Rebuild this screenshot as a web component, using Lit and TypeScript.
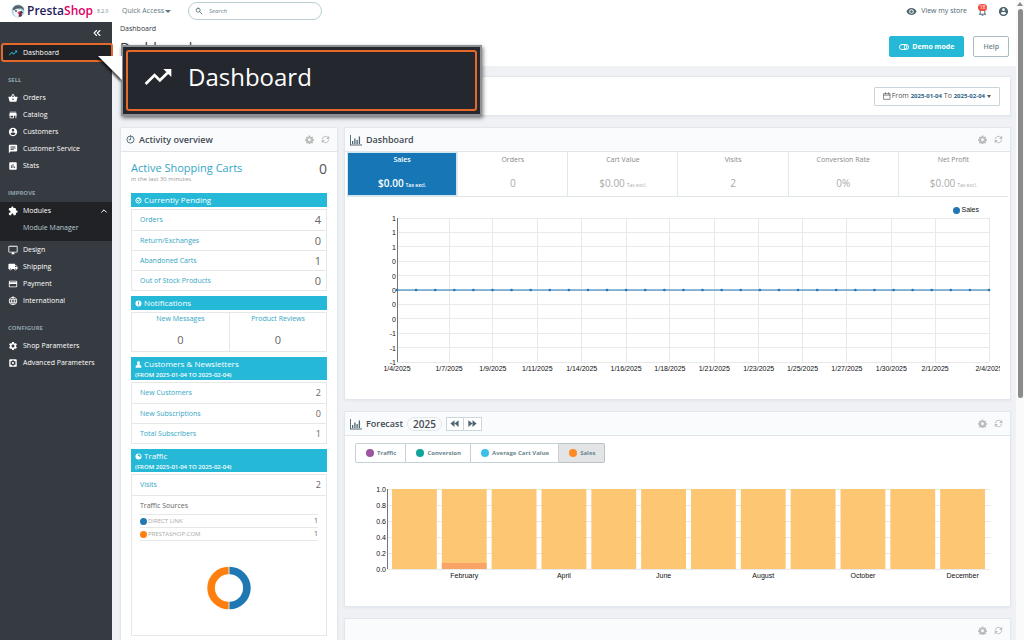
import { LitElement, html, svg, css, nothing, TemplateResult, SVGTemplateResult } from "lit";
import { customElement, state } from "lit/decorators.js";
import { classMap } from "lit/directives/class-map.js";
import { styleMap } from "lit/directives/style-map.js";

const GEAR =
  "M19.14 12.94c.04-.3.06-.61.06-.94 0-.32-.02-.64-.07-.94l2.03-1.58c.18-.14.23-.41.12-.61l-1.92-3.32c-.12-.22-.37-.29-.59-.22l-2.39.96c-.5-.38-1.03-.7-1.62-.94l-.36-2.54c-.04-.24-.24-.41-.48-.41h-3.84c-.24 0-.43.17-.47.41l-.36 2.54c-.59.24-1.13.57-1.62.94l-2.39-.96c-.22-.08-.47 0-.59.22L2.74 8.87c-.12.21-.08.47.12.61l2.03 1.58c-.05.3-.09.63-.09.94s.02.64.07.94l-2.03 1.58c-.18.14-.23.41-.12.61l1.92 3.32c.12.22.37.29.59.22l2.39-.96c.5.38 1.03.7 1.62.94l.36 2.54c.05.24.24.41.48.41h3.84c.24 0 .44-.17.47-.41l.36-2.54c.59-.24 1.13-.56 1.62-.94l2.39.96c.22.08.47 0 .59-.22l1.92-3.32c.12-.22.07-.47-.12-.61l-2.01-1.58zM12 15.6c-1.98 0-3.6-1.62-3.6-3.6s1.62-3.6 3.6-3.6 3.6 1.62 3.6 3.6-1.62 3.6-3.6 3.6z";

const stroke = (d: string, w = 2) =>
  svg`<path d=${d} fill="none" stroke="currentColor" stroke-width=${w} stroke-linecap="round" stroke-linejoin="round"/>`;

const ICONS: Record<string, SVGTemplateResult> = {
  trend: svg`<path d="M16 6l2.29 2.29-4.88 4.88-4-4L2 16.59 3.41 18l6-6 4 4 6.3-6.29L22 12V6z"/>`,
  basket: svg`<path d="M17.21 9l-4.38-6.56c-.19-.28-.51-.42-.83-.42-.32 0-.64.14-.83.43L6.79 9H2c-.55 0-1 .45-1 1 0 .09.01.18.04.27l2.54 9.27c.23.84 1 1.46 1.92 1.46h13c.92 0 1.69-.62 1.93-1.46l2.54-9.27L23 10c0-.55-.45-1-1-1h-4.79zM9 9l3-4.4L15 9H9zm3 8c-1.1 0-2-.9-2-2s.9-2 2-2 2 .9 2 2-.9 2-2 2z"/>`,
  store: svg`<path d="M20 4H4v2h16V4zm1 10v-2l-1-5H4l-1 5v2h1v6h10v-6h4v6h2v-6h1zm-9 4H6v-4h6v4z"/>`,
  account: svg`<path d="M12 2C6.48 2 2 6.48 2 12s4.48 10 10 10 10-4.48 10-10S17.52 2 12 2zm0 3c1.66 0 3 1.34 3 3s-1.34 3-3 3-3-1.34-3-3 1.34-3 3-3zm0 14.2c-2.5 0-4.71-1.28-6-3.22.03-1.99 4-3.08 6-3.08 1.99 0 5.97 1.09 6 3.08-1.29 1.94-3.5 3.22-6 3.22z"/>`,
  chat: svg`<path d="M20 2H4c-1.1 0-1.99.9-1.99 2L2 22l4-4h14c1.1 0 2-.9 2-2V4c0-1.1-.9-2-2-2zM6 9h12v2H6V9zm8 5H6v-2h8v2zm4-6H6V6h12v2z"/>`,
  stats: svg`<path d="M19 3H5c-1.1 0-2 .9-2 2v14c0 1.1.9 2 2 2h14c1.1 0 2-.9 2-2V5c0-1.1-.9-2-2-2zM9 17H7v-7h2v7zm4 0h-2V7h2v10zm4 0h-2v-4h2v4z"/>`,
  puzzle: svg`<path d="M20.5 11H19V7c0-1.1-.9-2-2-2h-4V3.5C13 2.12 11.88 1 10.5 1S8 2.12 8 3.5V5H4c-1.1 0-1.99.9-1.99 2v3.8H3.5c1.49 0 2.7 1.21 2.7 2.7s-1.21 2.7-2.7 2.7H2V20c0 1.1.9 2 2 2h3.8v-1.5c0-1.49 1.21-2.7 2.7-2.7 1.49 0 2.7 1.21 2.7 2.7V22H17c1.1 0 2-.9 2-2v-4h1.5c1.38 0 2.5-1.12 2.5-2.5S21.88 11 20.5 11z"/>`,
  desktop: svg`<path d="M21 2H3c-1.1 0-2 .9-2 2v12c0 1.1.9 2 2 2h7v2H8v2h8v-2h-2v-2h7c1.1 0 2-.9 2-2V4c0-1.1-.9-2-2-2zm0 14H3V4h18v12z"/>`,
  truck: svg`<path d="M20 8h-3V4H3c-1.1 0-2 .9-2 2v11h2c0 1.66 1.34 3 3 3s3-1.34 3-3h6c0 1.66 1.34 3 3 3s3-1.34 3-3h2v-5l-3-4zM6 18.5c-.83 0-1.5-.67-1.5-1.5s.67-1.5 1.5-1.5 1.5.67 1.5 1.5-.67 1.5-1.5 1.5zm13.5-9l1.96 2.5H17V9.5h2.5zm-1.5 9c-.83 0-1.5-.67-1.5-1.5s.67-1.5 1.5-1.5 1.5.67 1.5 1.5-.67 1.5-1.5 1.5z"/>`,
  card: svg`<path d="M20 4H4c-1.11 0-1.99.89-1.99 2L2 18c0 1.11.89 2 2 2h16c1.11 0 2-.89 2-2V6c0-1.11-.89-2-2-2zm0 14H4v-6h16v6zm0-10H4V6h16v2z"/>`,
  globe: stroke("M12 3a9 9 0 1 0 0 18a9 9 0 1 0 0-18zM3.6 9h16.8M3.6 15h16.8M12 3c-4.6 5-4.6 13 0 18c4.6-5 4.6-13 0-18z"),
  gear: svg`<path d=${GEAR}/>`,
  gearbox: svg`<path fill-rule="evenodd" d="M5 3h14a2 2 0 0 1 2 2v14a2 2 0 0 1-2 2H5a2 2 0 0 1-2-2V5a2 2 0 0 1 2-2zM10.500 5.500l-.4 1.700-1.400.8-1.700-.6-1.500 2.600 1.300 1.200v1.600l-1.300 1.200 1.500 2.600 1.700-.6 1.400.8.4 1.700h3l.4-1.700 1.400-.8 1.700.6 1.500-2.600-1.300-1.200v-1.600l1.300-1.200-1.500-2.600-1.700.6-1.400-.8-.4-1.700zM12 9.400a2.600 2.600 0 1 1 0 5.200a2.600 2.600 0 1 1 0-5.200z"/>`,
  eye: svg`<path d="M12 4.500C7 4.500 2.730 7.610 1 12c1.730 4.390 6 7.500 11 7.500s9.270-3.110 11-7.500c-1.730-4.390-6-7.500-11-7.500zM12 17c-2.760 0-5-2.240-5-5s2.240-5 5-5 5 2.240 5 5-2.240 5-5 5zm0-8c-1.660 0-3 1.340-3 3s1.340 3 3 3 3-1.340 3-3-1.340-3-3-3z"/>`,
  bell: svg`<path d="M12 22c1.100 0 2-.9 2-2h-4c0 1.100.9 2 2 2zm6-6v-5c0-3.070-1.630-5.640-4.500-6.320V4c0-.83-.67-1.500-1.500-1.500s-1.500.67-1.500 1.500v.68C7.640 5.360 6 7.920 6 11v5l-2 2v1h16v-1l-2-2zm-2 1H8v-6c0-2.480 1.510-4.500 4-4.500s4 2.020 4 4.500v6z"/>`,
  cog: svg`<path fill-rule="evenodd" d="M10 1.500h4l.6 3 2 .9 2.600-1.700 2.600 2.700-1.600 2.500.8 2 3 .6v3.800l-3 .5-.8 2 1.600 2.500-2.700 2.700-2.500-1.700-2 .8-.6 3h-4l-.6-3-2-.8-2.500 1.700-2.700-2.700 1.700-2.500-.9-2-3-.5v-3.800l3-.6.9-2-1.700-2.500 2.700-2.700 2.500 1.700 2-.9zM12 8.800a3.800 3.800 0 1 0 0 7.600a3.800 3.800 0 1 0 0-7.600z"/>`,
  refresh: svg`${stroke("M3.500 10.500A8.800 8.800 0 0 1 18.500 6M20.500 13.500A8.800 8.800 0 0 1 5.500 18", 2.6)}<path d="M22 2v8.500h-8.500zM2 22v-8.500h8.500z"/>`,
  clock: stroke("M12 2.500a9.500 9.500 0 1 0 0 19a9.500 9.500 0 1 0 0-19zM12.500 7v5.500H8.500", 2.5),
  check: stroke("M12 3a9 9 0 1 0 0 18a9 9 0 1 0 0-18zM8 11.500l3.500 3.500L18 7", 3.4),
  alert: svg`<path fill-rule="evenodd" d="M12 1.500a10.500 10.500 0 1 0 0 21a10.500 10.500 0 1 0 0-21zM10.300 5h3.400l-.4 8.500h-2.600zM10.500 15.500h3v3h-3z"/>`,
  user: svg`<path d="M12 1c3.200 0 5 2.300 5 5.800 0 2.700-1 4.800-2.400 6 4.400.8 7.400 2.600 7.400 8.200 0 1.400-1 2-2 2H4c-1 0-2-.6-2-2 0-5.600 3-7.400 7.400-8.200C8 11.600 7 9.500 7 6.800 7 3.300 8.800 1 12 1z"/>`,
  world: svg`<path fill-rule="evenodd" d="M12 1.500a10.500 10.500 0 1 0 0 21a10.500 10.500 0 1 0 0-21zM12 4.500l4 1 3.500 3.500-1 4-4-.5-1-2.500-3.500.5-.5-3z"/>`,
  chart: svg`<path d="M0 2h1.800v19H24v1.800H0zM4 14h2.600v6H4zM8.500 9h2.600v11H8.500zM13 12h2.600v8H13zM17.500 5h2.600v15h-2.600z"/>`,
  search: stroke("M9.500 3.500a6 6 0 1 0 0 12a6 6 0 1 0 0-12zM14 14l7 7", 2.4),
  calendar: stroke("M3 5h18v17H3zM3 9.500h18M7.500 2v4M16.500 2v4", 2),
  toggle: stroke("M7 6h10a6 6 0 0 1 0 12H7a6 6 0 0 1 0-12zM13 6v12M13 6a6 6 0 0 1 0 12", 2.2),
  collapse: stroke("M11 6l-6 6 6 6M19 6l-6 6 6 6", 2.6),
  up: stroke("M5 15.500l7-7 7 7", 3),
  prev: svg`<path d="M12 3v18L1 12zM23 3v18L12 12z"/>`,
  next: svg`<path d="M1 3v18l11-9zM12 3v18l11-9z"/>`,
};

const icon = (name: string, cls = "") =>
  html`<svg class="ico ${cls}" viewBox="0 0 24 24" fill="currentColor" aria-hidden="true">${ICONS[name]}</svg>`;

interface NavItem { label: string; icon: string; sub?: string }
const NAV: { title: string; items: NavItem[] }[] = [
  {
    title: "SELL",
    items: [
      { label: "Orders", icon: "basket" },
      { label: "Catalog", icon: "store" },
      { label: "Customers", icon: "account" },
      { label: "Customer Service", icon: "chat" },
      { label: "Stats", icon: "stats" },
    ],
  },
  {
    title: "IMPROVE",
    items: [
      { label: "Modules", icon: "puzzle", sub: "Module Manager" },
      { label: "Design", icon: "desktop" },
      { label: "Shipping", icon: "truck" },
      { label: "Payment", icon: "card" },
      { label: "International", icon: "globe" },
    ],
  },
  {
    title: "CONFIGURE",
    items: [
      { label: "Shop Parameters", icon: "gear" },
      { label: "Advanced Parameters", icon: "gearbox" },
    ],
  },
];

const KPIS = [
  { label: "Sales", value: "$0.00", tax: true },
  { label: "Orders", value: "0" },
  { label: "Cart Value", value: "$0.00", tax: true },
  { label: "Visits", value: "2" },
  { label: "Conversion Rate", value: "0%" },
  { label: "Net Profit", value: "$0.00", tax: true },
];

const Y_TICKS = ["1", "1", "1", "0", "0", "0", "0", "0", "-1", "-1", "-1"];
const X_TICKS: [string, number][] = [
  ["1/4/2025", 0], ["1/7/2025", 8.8], ["1/9/2025", 16.2], ["1/11/2025", 23.7], ["1/14/2025", 31.2],
  ["1/16/2025", 38.7], ["1/18/2025", 46.1], ["1/21/2025", 53.6], ["1/23/2025", 61.1], ["1/25/2025", 68.5],
  ["1/27/2025", 76], ["1/30/2025", 83.5], ["2/1/2025", 90.9], ["2/4/2025", 100],
];
const DAYS = 31;

const MONTHS = ["January", "February", "March", "April", "May", "June", "July", "August", "September", "October", "November", "December"];

const SERIES = [
  { label: "Traffic", color: "#9c55a0" },
  { label: "Conversion", color: "#10a39b" },
  { label: "Average Cart Value", color: "#38c0e8" },
  { label: "Sales", color: "#ff8a26" },
];

@customElement("app-root")
export class AppRoot extends LitElement {
  @state() private kpi = 0;
  @state() private series = 3;

  static styles = css`
    :host { display: block; font-family: "Open Sans", "Noto Sans", sans-serif; font-size: 7px; line-height: 10px; color: #555; }
    * { box-sizing: border-box; }
    button, input { font: inherit; color: inherit; margin: 0; }
    button { cursor: pointer; }
    a { color: inherit; text-decoration: none; }
    h1, h2, h3, p, ul { margin: 0; padding: 0; font-weight: 400; font-size: inherit; }
    ul { list-style: none; }
    .ico { display: block; width: 10px; height: 10px; flex: none; }

    .page { position: relative; height: 100vh; overflow: hidden; display: flex; background: #eff1f4; }
    .app { flex: 1; min-width: 0; display: flex; flex-direction: column; }

    .top { flex: none; height: 22px; background: #fff; display: flex; align-items: center; color: #5f7881; }
    .brand { width: 112px; flex: none; display: flex; align-items: center; padding-left: 11px; gap: 2px; }
    .brand .mark { width: 14px; height: 14px; flex: none; }
    .name { font-size: 12px; line-height: 16px; font-weight: 600; color: #251b5b; }
    .name span { color: #df0067; }
    .version { font-size: 5px; margin-left: 2px; color: #6c868e; }
    .quick { border: 0; background: none; padding: 0; margin-left: 10px; display: flex; align-items: center; gap: 1px; }
    .caret { border: 3px solid transparent; border-top-color: currentColor; border-bottom: 0; }
    .search { margin-left: 17px; width: 134px; height: 18px; border: 1px solid #bbcdd2; border-radius: 9px; display: flex; align-items: center; padding: 0 6px; gap: 6px; background: #fff; }
    .search .ico { width: 8px; height: 8px; color: #4e6670; }
    .search input { flex: 1; min-width: 0; border: 0; outline: 0; padding: 0; background: none; font-size: 6px; }
    .search input::placeholder { font-style: italic; color: #6c868e; opacity: 1; }
    .tools { margin-left: auto; display: flex; align-items: center; gap: 10px; padding-right: 7px; color: #4e6670; }
    .store { display: flex; align-items: center; gap: 4px; }
    .icon-btn { border: 0; background: none; padding: 0; display: block; position: relative; color: inherit; }
    .tools .ico { width: 11px; height: 11px; }
    .badge { position: absolute; top: -2px; left: 1px; min-width: 9px; height: 7px; border-radius: 4px; background: #f54c3e; color: #fff; font-size: 5px; line-height: 7px; text-align: center; }

    .below { flex: 1; min-height: 0; display: flex; }
    .side { width: 112px; flex: none; background: #363a41; color: #fff; }
    .fold { display: flex; justify-content: flex-end; height: 22px; align-items: center; padding-right: 10px; }
    .link { height: 17px; display: flex; align-items: center; gap: 5px; padding: 0 4px 0 8px; }
    .link .more { margin-left: auto; width: 8px; height: 8px; }
    .current { background: #202226; border: 2px solid #e5692a; border-radius: 3px; margin: -1px -1px -1px 1px; padding-left: 5px; position: relative; height: 19px; }
    .current .ico { color: #25b9d7; }
    .group { padding-top: 13px; }
    .group h2 { height: 15px; padding-left: 8px; font-size: 6px; line-height: 12px; font-weight: 700; color: #8fa3ab; }
    .open { background: #202226; }
    .sub { display: block; height: 22px; line-height: 18px; padding-left: 23px; color: #bbcdd2; }

    .main { flex: 1; min-width: 0; overflow: hidden; padding-right: 5px; }
    .pagehead { background: #fff; height: 44px; padding: 1px 2px 0 8px; margin-right: -5px; display: flex; justify-content: space-between; }
    .crumb { color: #363a41; line-height: 12px; }
    h1 { font-size: 14px; line-height: 20px; color: #363a41; margin-top: 3px; }
    .actions { display: flex; gap: 9px; padding: 13px 5px 0 0; }
    .btn { height: 21px; border-radius: 2px; border: 1px solid #25b9d7; background: #25b9d7; color: #fff; font-weight: 700; padding: 0 9px; display: flex; align-items: center; gap: 3px; }
    .btn.ghost { background: #fff; color: #6c868e; border-color: #a9bcc3; font-weight: 600; }

    .content { padding: 10px 0 0 8px; }
    .panel { background: #fff; border: 1px solid #e1e7ec; border-radius: 2px; box-shadow: 0 1px 2px #d9dfe688; }
    .range { height: 40px; display: flex; justify-content: flex-end; align-items: center; padding-right: 10px; }
    .date { height: 19px; border: 1px solid #c7d6db; background: #fff; border-radius: 1px; padding: 0 8px; display: flex; align-items: center; gap: 1px; white-space: pre; }
    .date b { color: #2b6285; font-weight: 700; font-size: 6px; }
    .date .ico { width: 8px; height: 8px; }
    .date .caret { border-width: 2px; border-top-width: 3px; border-bottom: 0; margin-left: 1px; }

    .cols { display: grid; grid-template-columns: 218px minmax(0, 1fr); gap: 6px; margin-top: 11px; align-items: start; }
    .stack { display: flex; flex-direction: column; gap: 11px; min-width: 0; }
    .phead { height: 24px; background: #fafbfc; border-bottom: 1px solid #dfe6ea; display: flex; align-items: center; gap: 4px; padding: 0 7px 0 5px; color: #4e6670; }
    .phead h2 { font-size: 9px; line-height: 14px; font-weight: 600; color: #414a54; }
    .phead .tint { width: 12px; height: 12px; }
    .phead .tint.small { width: 9px; height: 9px; }
    .pact { margin-left: auto; display: flex; gap: 7px; color: #bbb; }
    .pact .ico { width: 9px; height: 9px; }

    .act { padding: 8px 10px 0; height: 560px; color: #555; }
    .blue { color: #34a6c4; }
    .lead { display: flex; justify-content: space-between; height: 33px; }
    .lead .blue { font-size: 11px; line-height: 15px; }
    .lead small { display: block; font-size: 6px; line-height: 9px; color: #999; }
    .lead .n { font-size: 14px; line-height: 18px; }
    .bar { background: #25b9d7; color: #fff; padding: 0 4px; min-height: 14px; font-size: 8px; line-height: 14px; }
    .bar h3 { font: inherit; display: flex; align-items: center; gap: 2px; }
    .bar .ico { width: 7px; height: 7px; }
    .bar p { font-size: 6px; line-height: 9px; font-weight: 600; }
    .box { border: 1px solid #e4e8ea; margin: 2px 0 5px; }
    .row { display: flex; align-items: center; justify-content: space-between; height: 20px; padding: 0 5px 0 8px; border-top: 1px solid #e4e8ea; }
    .row:first-child { border-top: 0; }
    .row b, .cell b { font-weight: 400; font-size: 11px; line-height: 14px; color: #666; }
    .mini b { font-size: 9px; }
    .pair { display: grid; grid-template-columns: 1fr 1fr; height: 40px; }
    .cell { text-align: center; padding-top: 1px; display: flex; flex-direction: column; gap: 9px; }
    .cell + .cell { border-left: 1px solid #e4e8ea; }
    .sources { padding: 4px 8px 0; border-top: 1px solid #e4e8ea; }
    .sources h3 { line-height: 12px; padding-bottom: 2px; color: #666; }
    .src { display: flex; align-items: center; gap: 1px; height: 13px; border-top: 1px solid #e4e8ea; color: #aaa; font-size: 6px; }
    .src:last-child { border-bottom: 1px solid #e4e8ea; height: 14px; }
    .src span { margin-left: auto; color: #666; font-size: 7px; }
    .dot { width: 7px; height: 7px; border-radius: 50%; flex: none; }
    .donut { display: block; width: 44px; height: 44px; margin: 25px auto; }

    .kpis { display: grid; grid-template-columns: repeat(6, 1fr); border-bottom: 1px solid #dfe6ea; margin: 0 2px; }
    .kpi { height: 44px; border: 0; border-left: 1px solid #e4e8ea; background: #fff; padding: 3px 0 0; display: flex; flex-direction: column; align-items: center; gap: 11px; color: #888; }
    .kpi:first-child { border-left: 0; }
    .kpi strong { font-weight: 400; font-size: 10px; line-height: 14px; color: #aaa; }
    .kpi small { font-size: 5px; color: #aaa; }
    .kpi.on { background: #1777b6; border: 1px solid #cfe6f5; color: #fff; padding-top: 2px; font-weight: 600; }
    .kpi.on strong, .kpi.on small { color: #fff; font-weight: 600; }

    .chart-text { font-family: "Liberation Sans", Arial, sans-serif; font-size: 7px; color: #111; fill: #111; }
    .legend { display: flex; justify-content: flex-end; align-items: center; gap: 1px; height: 16px; margin-top: 5px; padding-right: 31px; }
    .line { margin: 0 10px 0 3px; padding: 0 11px 0 49px; overflow-x: clip; overflow-y: visible; height: 181px; }
    .line svg, .bars svg { display: block; width: 100%; overflow: visible; }
    .line svg { height: 160px; }
    .bars { padding: 26px 20px 0 42px; height: 143px; }
    .bars svg { height: 100px; }
    .grid { stroke: #e9e9e9; stroke-width: 1; shape-rendering: crispEdges; }
    .axis { stroke: #777; stroke-width: 1; shape-rendering: crispEdges; }

    .year { border: 1px solid #dfe6ea; border-radius: 8px; height: 14px; line-height: 12px; padding: 0 5px; font-size: 10px; font-weight: 600; color: #414a54; }
    .steps { display: flex; }
    .steps button { height: 14px; width: 18px; border: 1px solid #ccd7dc; background: #fff; padding: 0; display: grid; place-items: center; color: #4e6670; }
    .steps button + button { border-left: 0; }
    .steps .ico { width: 9px; height: 9px; }
    .toggles { display: flex; padding: 7px 10px 0; }
    .tog { height: 20px; border: 1px solid #c7d0d5; border-left-width: 0; background: #fff; color: #6c868e; font-weight: 700; font-size: 6px; padding: 0 9px 0 10px; display: flex; align-items: center; gap: 3px; }
    .tog .dot { width: 8px; height: 8px; }
    .tog:first-child { border-left-width: 1px; border-radius: 2px 0 0 2px; }
    .tog:last-child { border-radius: 0 2px 2px 0; }
    .tog.on { background: #e2e4e6; border-color: #b9c2c7; }

    .scroll { width: 8px; flex: none; background: #fafafa; display: flex; flex-direction: column; align-items: center; padding-top: 2px; }
    .scroll i { border: 3px solid transparent; border-bottom: 4px solid #8b8b8b; border-top: 0; }
    .thumb { width: 5px; height: 61%; margin-top: 3px; border-radius: 3px; background: #8b8b8b; }

    .callout { position: absolute; left: 121px; top: 45px; width: 361px; height: 71px; background: #24272d; border: 2px solid #8d9195; padding: 3px; box-shadow: 1px 2px 4px #0008; }
    .callout div { height: 100%; border: 2px solid #e5692a; border-radius: 3px; display: flex; align-items: center; gap: 14px; padding: 0 0 8px 14px; color: #fff; font-size: 24px; line-height: 34px; }
    .callout .ico { width: 32px; height: 32px; }
    .pointer { position: absolute; left: 94px; top: 52px; width: 28px; height: 34px; filter: drop-shadow(-1px 2px 1px #000b); }
  `;

  private panelHead(iconName: string, title: string, extra: TemplateResult | typeof nothing = nothing, small = false) {
    return html`<header class="phead">
      ${iconName ? icon(iconName, small ? "tint small" : "tint") : nothing}
      ${title ? html`<h2>${title}</h2>` : nothing}
      ${extra}
      <span class="pact">
        <button class="icon-btn" aria-label="Configure">${icon("cog")}</button>
        <button class="icon-btn" aria-label="Refresh">${icon("refresh")}</button>
      </span>
    </header>`;
  }

  private bar(iconName: string, title: string, dated = false) {
    return html`<div class="bar">
      <h3>${icon(iconName)}${title}</h3>
      ${dated ? html`<p>(FROM 2025-01-04 TO 2025-02-04)</p>` : nothing}
    </div>`;
  }

  private rows(items: [string, string][], mini = false) {
    return html`<ul class=${classMap({ box: true, mini })}>
      ${items.map(([k, v]) => html`<li class="row"><a class="blue" href="#">${k}</a><b>${v}</b></li>`)}
    </ul>`;
  }

  private lineChart() {
    const step = 14.4;
    return html`<svg class="chart-text" role="img" aria-label="Sales by day">
      ${Y_TICKS.map((t, i) => svg`
        <line class="grid" x1="0" x2="100%" y1=${i * step} y2=${i * step}></line>
        <text x="-1" y=${i * step + 3} text-anchor="end">${t}</text>`)}
      ${X_TICKS.map(([t, p]) => svg`
        <line class="grid" x1="${p}%" x2="${p}%" y1="0" y2="144"></line>
        <text x="${p}%" y="153" text-anchor="middle">${t}</text>`)}
      <line class="axis" x1="0" x2="0" y1="0" y2="144"></line>
      <line x1="0" x2="100%" y1="72" y2="72" stroke="#1f77b4" stroke-width="1"></line>
      ${Array.from({ length: DAYS + 1 }, (_, i) => svg`<circle cx="${(i * 100) / DAYS}%" cy="72" r="1.300" fill="#1f77b4"></circle>`)}
    </svg>`;
  }

  private barChart() {
    const unit = 100 / 12.1;
    return html`<svg class="chart-text" role="img" aria-label="Forecast by month">
      ${["1.0", "0.8", "0.6", "0.4", "0.2", "0.0"].map((t, i) => svg`
        <line class="grid" x1="0" x2="100%" y1=${i * 16} y2=${i * 16}></line>
        <text x="-1" y=${i * 16 + 3} text-anchor="end">${t}</text>`)}
      <line class="axis" x1="0" x2="0" y1="0" y2="80"></line>
      ${MONTHS.map((m, i) => svg`
        <rect x="${(i + 0.1) * unit}%" y="0" width="${0.9 * unit}%" height="80" fill="#fdc36c" fill-opacity=".95"></rect>
        ${i === 1 ? svg`<rect x="${(i + 0.1) * unit}%" y="74" width="${0.9 * unit}%" height="6" fill="#f9a466"></rect>` : nothing}
        ${i % 2 ? svg`<text x="${(i + 0.55) * unit}%" y="89" text-anchor="middle">${m}</text>` : nothing}`)}
    </svg>`;
  }

  render() {
    return html`<div class="page">
      <div class="app">
        <header class="top">
          <a class="brand" href="#">
            <svg class="mark" viewBox="0 0 28 28" aria-hidden="true">
              <circle cx="14" cy="14" r="13" fill="#a5d9e4"></circle>
              <path d="M3 11C5 3 12 1 18 3c5 1 8 5 8 10l-5-4-9 0-5 4z" fill="#5a5f6b"></path>
              <path d="M5 15c2-6 9-7 13-2l2 7-6 6c-5 0-9-4-9-11z" fill="#f5f5f5"></path>
              <path d="M15 15c3-2 8-1 9 2l-3 3 1 3c-2 3-5 3-7 2l1-5z" fill="#6d2c4c"></path>
              <circle cx="10" cy="14" r="1.800" fill="#444"></circle>
              <circle cx="18" cy="13" r="2" fill="#fff"></circle>
              <path d="M12 17l6-1-2 5z" fill="#df4067"></path>
            </svg>
            <span class="name">Presta<span>Shop</span></span>
            <span class="version">8.2.0</span>
          </a>
          <button class="quick">Quick Access <span class="caret"></span></button>
          <label class="search">${icon("search")}<input type="text" placeholder="Search" aria-label="Search" /></label>
          <div class="tools">
            <a class="store" href="#">${icon("eye")}View my store</a>
            <button class="icon-btn" aria-label="Notifications">${icon("bell")}<span class="badge">18</span></button>
            <button class="icon-btn" aria-label="Account">${icon("account")}</button>
          </div>
        </header>

        <div class="below">
          <nav class="side" aria-label="Main">
            <div class="fold"><button class="icon-btn" aria-label="Collapse menu">${icon("collapse")}</button></div>
            <a class="link current" href="#">${icon("trend")}Dashboard</a>
            ${NAV.map((g) => html`<section class="group">
              <h2>${g.title}</h2>
              ${g.items.map((it) => it.sub
                ? html`<div class="open">
                    <a class="link" href="#">${icon(it.icon)}${it.label}${icon("up", "more")}</a>
                    <a class="sub" href="#">${it.sub}</a>
                  </div>`
                : html`<a class="link" href="#">${icon(it.icon)}${it.label}</a>`)}
            </section>`)}
          </nav>

          <main class="main">
            <div class="pagehead">
              <div>
                <div class="crumb">Dashboard</div>
                <h1>Dashboard</h1>
              </div>
              <div class="actions">
                <button class="btn">${icon("toggle")}Demo mode</button>
                <button class="btn ghost">Help</button>
              </div>
            </div>

            <div class="content">
              <section class="panel range">
                <button class="date">${icon("calendar")}<span>From <b>2025-01-04</b> To <b>2025-02-04</b></span><span class="caret"></span></button>
              </section>

              <div class="cols">
                <section class="panel">
                  ${this.panelHead("clock", "Activity overview", nothing, true)}
                  <div class="act">
                    <div class="lead">
                      <div><a class="blue" href="#">Active Shopping Carts</a><small>in the last 30 minutes</small></div>
                      <span class="n">0</span>
                    </div>
                    ${this.bar("check", "Currently Pending")}
                    ${this.rows([["Orders", "4"], ["Return/Exchanges", "0"], ["Abandoned Carts", "1"], ["Out of Stock Products", "0"]])}
                    ${this.bar("alert", "Notifications")}
                    <div class="box pair">
                      <div class="cell"><a class="blue" href="#">New Messages</a><b>0</b></div>
                      <div class="cell"><a class="blue" href="#">Product Reviews</a><b>0</b></div>
                    </div>
                    ${this.bar("user", "Customers & Newsletters", true)}
                    ${this.rows([["New Customers", "2"], ["New Subscriptions", "0"], ["Total Subscribers", "1"]], true)}
                    ${this.bar("world", "Traffic", true)}
                    <div class="box mini">
                      <div class="row"><a class="blue" href="#">Visits</a><b>2</b></div>
                      <div class="sources">
                        <h3>Traffic Sources</h3>
                        <ul>
                          <li class="src"><i class="dot" style=${styleMap({ background: "#1f77b4" })}></i>DIRECT LINK<span>1</span></li>
                          <li class="src"><i class="dot" style=${styleMap({ background: "#ff7f0e" })}></i>PRESTASHOP.COM<span>1</span></li>
                        </ul>
                        <svg class="donut" viewBox="-22 -22 44 44" role="img" aria-label="Traffic sources">
                          <path d="M.4-21.300A21.300 21.300 0 0 1 .4 21.300V13.700A13.700 13.700 0 0 0 .4-13.700z" fill="#1f77b4"></path>
                          <path d="M-.4-21.300A21.300 21.300 0 0 0-.4 21.300V13.700A13.700 13.700 0 0 1-.4-13.700z" fill="#ff7f0e"></path>
                        </svg>
                      </div>
                    </div>
                  </div>
                </section>

                <div class="stack">
                  <section class="panel">
                    ${this.panelHead("chart", "Dashboard")}
                    <div class="kpis">
                      ${KPIS.map((k, i) => html`<button class=${classMap({ kpi: true, on: i === this.kpi })} @click=${() => (this.kpi = i)}>
                        <span>${k.label}</span>
                        <span><strong>${k.value}</strong>${k.tax ? html` <small>Tax excl.</small>` : nothing}</span>
                      </button>`)}
                    </div>
                    <div class="legend chart-text"><i class="dot" style=${styleMap({ background: "#1f77b4" })}></i>Sales</div>
                    <div class="line">${this.lineChart()}</div>
                  </section>

                  <section class="panel">
                    ${this.panelHead("chart", "Forecast", html`
                      <span class="year">2025</span>
                      <span class="steps">
                        <button aria-label="Previous year">${icon("prev")}</button>
                        <button aria-label="Next year">${icon("next")}</button>
                      </span>`)}
                    <div class="toggles">
                      ${SERIES.map((s, i) => html`<button class=${classMap({ tog: true, on: i === this.series })} @click=${() => (this.series = i)}>
                        <i class="dot" style=${styleMap({ background: s.color })}></i>${s.label}
                      </button>`)}
                    </div>
                    <div class="bars">${this.barChart()}</div>
                  </section>

                  <section class="panel">${this.panelHead("", "")}</section>
                </div>
              </div>
            </div>
          </main>
        </div>
      </div>
      <div class="scroll" aria-hidden="true"><i></i><div class="thumb"></div></div>

      <div class="callout"><div>${icon("trend")}Dashboard</div></div>
      <svg class="pointer" viewBox="0 0 28 34" aria-hidden="true"><path d="M4 4H28V28z" fill="#fff"></path></svg>
    </div>`;
  }
}
